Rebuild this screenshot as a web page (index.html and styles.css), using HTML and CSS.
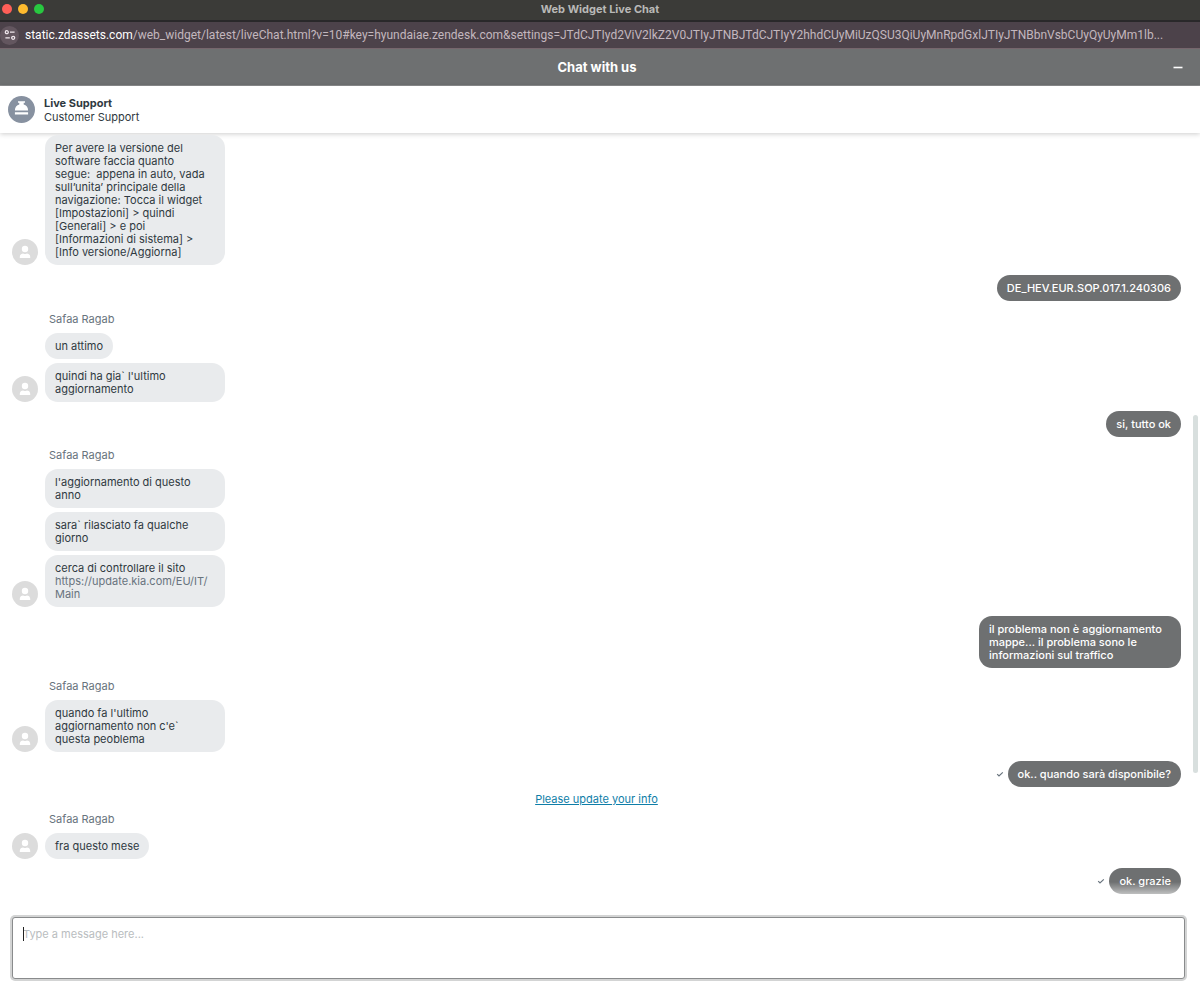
FILE: index.html
```html
<!DOCTYPE html>
<html lang="it">
<head>
  <meta charset="UTF-8">
  <meta name="viewport" content="width=device-width, initial-scale=1">
  <title>Web Widget Live Chat</title>
  <link rel="stylesheet" href="styles.css">
</head>
<body>
  <svg class="sprite" aria-hidden="true">
    <symbol id="person" viewBox="0 0 26 26">
      <circle cx="13" cy="13" r="13" fill="#dcdcdc"/>
      <circle cx="13" cy="10" r="3.2" fill="#fff"/>
      <path d="M7.8 19v-1.2c0-2.1 1.6-3.3 3.4-3.3.6.4 1.1.6 1.8.6s1.2-.2 1.8-.6c1.8 0 3.4 1.2 3.4 3.3V19z" fill="#fff"/>
    </symbol>
    <symbol id="check" viewBox="0 0 8 8">
      <path d="M1.2 4.2l1.8 1.8 3.8-3.6" fill="none" stroke="#68737d" stroke-width="1.2"/>
    </symbol>
  </svg>

  <div class="titlebar">
    <div class="lights">
      <span class="light red"></span>
      <span class="light yellow"></span>
      <span class="light green"></span>
    </div>
    <div class="window-title">Web Widget Live Chat</div>
  </div>

  <div class="urlbar">
    <button class="site-info" type="button" aria-label="Site information">
      <svg width="12" height="12" viewBox="0 0 12 12" fill="none" stroke="#efe6ec" stroke-width="1.3">
        <circle cx="2.8" cy="3.2" r="1.5"/>
        <path d="M6 3.2h4.6M1.4 8.8h4.4"/>
        <circle cx="9.2" cy="8.8" r="1.5"/>
      </svg>
    </button>
    <div class="url"><span class="host">static.zdassets.com</span>/web_widget/latest/liveChat.html?v=10#key=hyundaiae.zendesk.com&amp;settings=JTdCJTIyd2ViV2lkZ2V0JTIyJTNBJTdCJTIyY2hhdCUyMiUzQSU3QiUyMnRpdGxlJTIyJTNBbnVsbCUyQyUyMm1lb...</div>
  </div>

  <header class="widget-header">
    <h1>Chat with us</h1>
    <button class="minimize" type="button" aria-label="Minimize">
      <svg width="10" height="10" viewBox="0 0 10 10"><path d="M.5 5.5h9" stroke="#fff" stroke-width="1.6"/></svg>
    </button>
  </header>

  <div class="agent-bar">
    <svg width="27" height="27" viewBox="0 0 27 27">
      <circle cx="13.5" cy="13.5" r="13.5" fill="#8791a0"/>
      <path d="M10 5.2h7v1.6h-1.3v1.6c2.7.7 4.4 2.9 4.4 6H6.9c0-3.1 1.7-5.3 4.4-6V6.8H10zM6.9 16.2h13.2v2.4H6.9z" fill="#fff"/>
    </svg>
    <div>
      <div class="agent-title">Live Support</div>
      <div>Customer Support</div>
    </div>
  </div>

  <main class="log">
    <div class="agent">
      <svg class="avatar"><use href="#person"/></svg>
      <div class="bubble">Per avere la versione del software faccia quanto segue:&nbsp; appena in auto, vada sull’unita’ principale della navigazione: Tocca il widget [Impostazioni] &gt; quindi [Generali] &gt; e poi [Informazioni di sistema] &gt; [Info versione/Aggiorna]</div>
    </div>

    <div class="visitor">
      <div class="bubble">DE_HEV.EUR.SOP.017.1.240306</div>
    </div>

    <div class="agent">
      <div class="name">Safaa Ragab</div>
      <div class="bubble">un attimo</div>
      <svg class="avatar"><use href="#person"/></svg>
      <div class="bubble">quindi ha gia` l'ultimo aggiornamento</div>
    </div>

    <div class="visitor">
      <div class="bubble">si, tutto ok</div>
    </div>

    <div class="agent">
      <div class="name">Safaa Ragab</div>
      <div class="bubble">l'aggiornamento di questo anno</div>
      <div class="bubble">sara` rilasciato fa qualche giorno</div>
      <svg class="avatar"><use href="#person"/></svg>
      <div class="bubble">cerca di controllare il sito <a href="https://update.kia.com/EU/IT/Main">https://update.kia.com/EU/IT/<wbr>Main</a></div>
    </div>

    <div class="visitor">
      <div class="bubble">il problema non è aggiornamento mappe... il problema sono le informazioni sul traffico</div>
    </div>

    <div class="agent">
      <div class="name">Safaa Ragab</div>
      <svg class="avatar"><use href="#person"/></svg>
      <div class="bubble">quando fa l'ultimo aggiornamento non c'e` questa peoblema</div>
    </div>

    <div class="visitor">
      <svg class="check"><use href="#check"/></svg>
      <div class="bubble">ok.. quando sarà disponibile?</div>
    </div>

    <div class="update-info"><a href="#info">Please update your info</a></div>

    <div class="agent">
      <div class="name">Safaa Ragab</div>
      <svg class="avatar"><use href="#person"/></svg>
      <div class="bubble">fra questo mese</div>
    </div>

    <div class="visitor">
      <svg class="check"><use href="#check"/></svg>
      <div class="bubble">ok. grazie</div>
    </div>

    <div class="scroll-thumb"></div>
  </main>

  <footer class="composer">
    <textarea id="message" aria-label="Message" placeholder="Type a message here..."></textarea>
    <span class="caret"></span>
  </footer>
</body>
</html>
```

FILE: styles.css
```css
* {
  box-sizing: border-box;
}
body {
  margin: 0;
  min-height: 100vh;
  display: flex;
  flex-direction: column;
  background: #fff;
  color: #2f3941;
  font-family: Inter, "Liberation Sans", sans-serif;
  font-size: 11px;
  line-height: 13px;
}
button {
  border: 0;
  padding: 0;
  background: none;
  display: flex;
  align-items: center;
  justify-content: center;
}
.sprite {
  display: none;
}

/* browser window */
.titlebar {
  display: grid;
  grid-template-columns: 1fr auto 1fr;
  align-items: center;
  height: 22px;
  padding: 0 2px 2px;
  background: #3b3b38;
  border-bottom: 2px solid #29282a;
}
.lights {
  display: flex;
  gap: 6px;
}
.light {
  width: 10px;
  height: 10px;
  border-radius: 50%;
}
.red {
  background: #ff5f57;
}
.yellow {
  background: #febb2e;
}
.green {
  background: #28c840;
}
.window-title {
  color: #b9b9b7;
  font-weight: 700;
}
.urlbar {
  display: flex;
  align-items: center;
  gap: 6px;
  height: 27px;
  background: #4c424a;
  border-bottom: 1px solid #76666d;
}
.site-info {
  flex: none;
  width: 19px;
  height: 19px;
  border-radius: 50%;
  background: #63565f;
}
.url {
  min-width: 0;
  overflow: hidden;
  white-space: nowrap;
  color: #c3b7be;
  font-family: Roboto, "Liberation Sans", sans-serif;
  font-size: 12px;
  line-height: 16px;
}
.host {
  color: #fff;
}

/* chat widget */
.widget-header {
  display: grid;
  grid-template-columns: 1fr auto 1fr;
  align-items: center;
  height: 37px;
  padding: 0 17px 0 11px;
  background: #6e7071;
  border-bottom: 1px solid #8c8d8e;
  color: #fff;
}
.widget-header h1 {
  grid-column: 2;
  margin: 0;
  font-size: 13px;
  line-height: 16px;
}
.minimize {
  justify-self: end;
}
.agent-bar {
  position: relative;
  display: flex;
  align-items: center;
  gap: 9px;
  height: 47px;
  padding: 0 8px;
  line-height: 14px;
  box-shadow: 0 1px 5px rgba(0, 0, 0, 0.2);
}
.agent-title {
  font-weight: 700;
}
.log {
  position: relative;
  flex: 1;
  padding: 2px 19px 0 12px;
}
.agent {
  display: grid;
  grid-template-columns: 26px 180px;
  column-gap: 7px;
  row-gap: 4px;
  margin-top: 12px;
}
.agent:first-child {
  margin: 0 0 10px;
}
.name {
  grid-column: 2;
  padding-left: 4px;
  margin-bottom: 3px;
  color: #68737d;
}
.avatar {
  grid-column: 1;
  align-self: end;
  width: 26px;
  height: 26px;
}
.bubble {
  padding: 7px 10px 6px;
  border-radius: 13px;
}
.agent .bubble {
  grid-column: 2;
  justify-self: start;
  background: #e9ebed;
}
.bubble a {
  color: #68737d;
  text-decoration: none;
}
.visitor {
  display: flex;
  justify-content: flex-end;
  align-items: center;
  gap: 4px;
  margin-top: 9px;
}
.visitor .bubble {
  max-width: 202px;
  background: #6e7071;
  color: #fff;
  font-weight: 500;
}
.check {
  width: 8px;
  height: 8px;
}
.update-info {
  margin-top: 6px;
  text-align: center;
}
.update-info a {
  color: #0f7ea8;
}
.update-info + .agent {
  margin-top: 7px;
}
.scroll-thumb {
  position: absolute;
  top: 37%;
  right: 2px;
  width: 5px;
  height: 47%;
  border-radius: 3px;
  background: #d8dfde;
}

/* message box */
.composer {
  position: relative;
  padding: 22px 15px 16px 12px;
}
.composer::before {
  content: "";
  position: absolute;
  left: 0;
  right: 0;
  top: -13px;
  height: 13px;
  background: linear-gradient(rgba(255, 255, 255, 0), rgba(255, 255, 255, 0.6));
}
textarea {
  display: block;
  width: 100%;
  height: 62px;
  padding: 10px;
  border: 1px solid #898b8c;
  border-radius: 3px;
  outline: none;
  resize: none;
  box-shadow: 0 0 0 2px #d3d4d4;
  color: #2f3941;
  font: inherit;
}
textarea::placeholder {
  color: #b9bdc0;
}
.caret {
  position: absolute;
  left: 23px;
  top: 32px;
  width: 1px;
  height: 14px;
  background: #222;
}
```
